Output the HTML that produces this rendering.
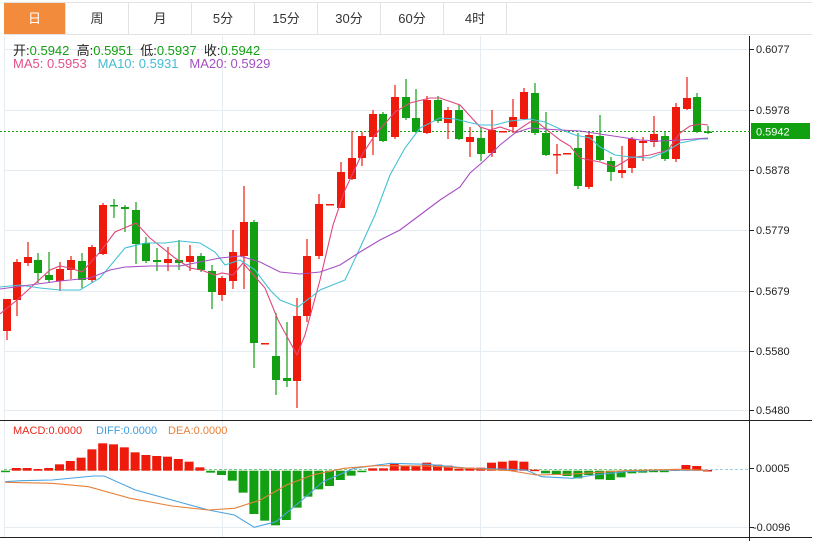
<!DOCTYPE html>
<html><head><meta charset="utf-8"><style>
body{margin:0;background:#fff;width:816px;height:541px;overflow:hidden;font-family:"Liberation Sans","Noto Sans CJK SC",sans-serif}
.tabs{position:absolute;left:4px;top:2px;height:31px;width:808px;border-top:1px solid #e3e3e3;border-bottom:1px solid #e3e3e3;display:flex}
.tab{height:31px;line-height:31px;text-align:center;font-size:13px;color:#333;border-right:1px solid #e3e3e3;box-sizing:border-box}
.tab.on{background:#f28c3c;color:#fff}
.info{position:absolute;left:13px;font-size:13px;white-space:nowrap}
svg{position:absolute;left:0;top:0}
</style></head><body>
<div class="tabs">
<div class="tab on" style="width:62px">日</div><div class="tab" style="width:63px">周</div><div class="tab" style="width:63px">月</div><div class="tab" style="width:63px">5分</div><div class="tab" style="width:63px">15分</div><div class="tab" style="width:63px">30分</div><div class="tab" style="width:63px">60分</div><div class="tab" style="width:63px">4时</div>
</div>
<svg width="816" height="541" id="s">
<g stroke="#e6edf2" stroke-width="1">
<line x1="4" y1="49.5" x2="750" y2="49.5"/><line x1="4" y1="110.5" x2="750" y2="110.5"/><line x1="4" y1="170.5" x2="750" y2="170.5"/><line x1="4" y1="230.5" x2="750" y2="230.5"/><line x1="4" y1="291.5" x2="750" y2="291.5"/><line x1="4" y1="351.5" x2="750" y2="351.5"/><line x1="4" y1="410.5" x2="750" y2="410.5"/>
<line x1="4" y1="527.5" x2="750" y2="527.5"/>
<line x1="222.5" y1="36" x2="222.5" y2="537"/><line x1="480.5" y1="36" x2="480.5" y2="537"/><line x1="4.5" y1="36" x2="4.5" y2="537"/>
</g>
<line x1="0" y1="420.5" x2="812" y2="420.5" stroke="#222"/>
<line x1="0" y1="537.5" x2="812" y2="537.5" stroke="#222"/>
<line x1="749.5" y1="36" x2="749.5" y2="541" stroke="#222"/>
<g stroke="#222"><line x1="749" y1="49.5" x2="754" y2="49.5"/><line x1="749" y1="110.5" x2="754" y2="110.5"/><line x1="749" y1="170.5" x2="754" y2="170.5"/><line x1="749" y1="230.5" x2="754" y2="230.5"/><line x1="749" y1="291.5" x2="754" y2="291.5"/><line x1="749" y1="351.5" x2="754" y2="351.5"/><line x1="749" y1="410.5" x2="754" y2="410.5"/><line x1="749" y1="468.5" x2="754" y2="468.5"/><line x1="749" y1="527.5" x2="754" y2="527.5"/></g>
<g font-size="11" fill="#222" font-family="Liberation Sans,sans-serif">
<text x="756" y="53">0.6077</text><text x="756" y="114">0.5978</text><text x="756" y="174">0.5878</text><text x="756" y="234">0.5779</text><text x="756" y="295">0.5679</text><text x="756" y="355">0.5580</text><text x="756" y="414">0.5480</text><text x="756" y="472">0.0005</text><text x="753" y="531">-0.0096</text>
</g>
<line x1="0" y1="131.5" x2="750" y2="131.5" stroke="#19a019" stroke-dasharray="2,2"/>
<line x1="700" y1="469.5" x2="750" y2="469.5" stroke="#9fd0e6" stroke-dasharray="3,2"/>
<line x1="4" y1="469.5" x2="700" y2="469.5" stroke="#7fc88a" stroke-dasharray="3,2"/>
<rect x="751" y="123" width="59" height="16" fill="#10a010"/>
<text x="756" y="135.5" font-size="11" fill="#fff">0.5942</text>
<g id="c"></g>
<g id="m"></g>
<g fill="none" stroke-width="1.1">
<polyline id="p5" stroke="#e0457b"/><polyline id="p10" stroke="#45c0d6"/><polyline id="p20" stroke="#a54fc4"/>
</g>
<g fill="none" stroke-width="1.1">
<polyline id="dif" stroke="#4ca3e0"/><polyline id="dea" stroke="#e8803a"/>
</g>
<text x="13" y="434" font-size="11" fill="#e8281c">MACD:0.0000</text>
<text x="96" y="434" font-size="11" fill="#3fa0e0">DIFF:0.0000</text>
<text x="168" y="434" font-size="11" fill="#e8803a">DEA:0.0000</text>
</svg>
<div class="info" style="top:40px;color:#222">开:<span style="color:#12a012">0.5942</span>&nbsp;&nbsp;高:<span style="color:#12a012">0.5951</span>&nbsp;&nbsp;低:<span style="color:#12a012">0.5937</span>&nbsp;&nbsp;收:<span style="color:#12a012">0.5942</span></div>
<div class="info" style="top:56px"><span style="color:#e0508a">MA5: 0.5953</span>&nbsp;&nbsp;&nbsp;<span style="color:#45bcd6">MA10: 0.5931</span>&nbsp;&nbsp;&nbsp;<span style="color:#a54fc4">MA20: 0.5929</span></div>
<script>
var R='#ee1a0c',G='#12a012';
var C=[[7,299,331,299,340,R],[17,262,300,259,316,R],[28,257,263,242,266,R],[38,260,273,253,283,G],[49,275,280,252,283,G],[60,269,281,262,291,R],[71,260,270,256,279,R],[82,261,280,253,288,G],[92,247,280,245,283,R],[103,205,254,203,255,R],[114,205,206.5,199,218,G],[125,207,209,205,232,G],[136,210,244,202,264,G],[146,243,261,237,263,G],[157,260,262,248,271,G],[168,259,263,247,271,R],[179,260,263,240,270,G],[190,256,262,245,271,R],[201,256,270,253,272,G],[212,271,292,265,309,G],[222,278,295,276,301,R],[233,252,281,230,289,R],[244,222,256,186,289,R],[254,222,343,220,368,G],[265,343,344.5,343,344,R],[276,356,380,313,395,G],[287,378,381,322,387,G],[297,316,381,298,408,R],[307,256,316,239,322,R],[319,204,256,194,259,R],[330,204,205.5,204,205,R],[341,172,208,162,208,R],[352,158,179,131,180,R],[362,136,158,132,166,R],[373,114,137,110,155,R],[383,114,141,112,142,G],[395,97,137,85,139,R],[406,97,118,79,120,G],[416,118,132,89,133,G],[427,100,133,96,134,R],[438,100,121,96,123,G],[448,110,123,107,139,R],[459,110,139,105,140,G],[470,137,142,127,157,R],[481,138,154,127,161,G],[492,130,153,110,157,R],[503,131,132.5,131,132,R],[513,117,127,99,133,R],[524,92,119,88,120,R],[535,93,133,83,135,G],[546,133,155,112,156,G],[557,154,155.5,144,174,R],[567,153,154.5,153,154,R],[578,148,186,133,189,G],[589,135,187,132,189,R],[600,136,160,115,161,G],[611,161,172,157,181,G],[622,170,173,146,178,R],[632,139,168,137,173,R],[643,141,143,137,161,R],[654,134,142,116,147,R],[665,136,159,132,161,G],[676,107,159,103,162,R],[687,98,109,77,110,R],[697,97,132,93,133,G],[708,131.5,133,126,134,G]];
var h='';
C.forEach(function(c){h+='<line x1="'+c[0]+'" y1="'+c[3]+'" x2="'+c[0]+'" y2="'+c[4]+'" stroke="'+c[5]+'" stroke-width="1.2"/>';h+='<rect x="'+(c[0]-4)+'" y="'+c[1]+'" width="8" height="'+Math.max(1.5,c[2]-c[1])+'" fill="'+c[5]+'"/>';});
document.getElementById('c').innerHTML=h;
var M=[215,204,204,207,204,193,183,173,148,130,133,142,157,165,168,170,177,185,202,218,225,242,278,342,362,376,360,323,290,268,258,240,227,214,205,205,190,197,197,188,194,197,206,203,203,188,185,182,185,209,220,225,228,235,225,238,240,232,220,218,215,213,208,195,198,210];
var z=470.7,m='';
M.forEach(function(v,i){var x=5.5+10.8*i,y=400+v/3,c=v>212?G:R;var t=Math.min(y,z),hh=Math.max(1.5,Math.abs(y-z));m+='<rect x="'+(x-4.5)+'" y="'+t+'" width="9" height="'+hh+'" fill="'+c+'"/>';});
document.getElementById('m').innerHTML=m;
function P(id,a){document.getElementById(id).setAttribute('points',a.map(function(p){return p.join(',')}).join(' '));}
P('p5',[[0,314],[17,300],[50,270],[60,266],[70,268],[82,272],[100,252],[115,232],[136,223],[150,238],[175,258],[190,268],[201,270],[215,275],[222,273],[233,275],[243,263],[265,288],[278,320],[297,355],[305,335],[320,280],[333,225],[345,190],[360,158],[375,135],[395,112],[410,103],[430,98],[440,98],[460,105],[480,127],[490,130],[500,127],[515,132],[530,122],[537,122],[560,140],[570,146],[580,158],[590,160],[600,162],[615,167],[622,163],[630,158],[650,155],[668,150],[680,133],[690,126],[700,124],[708,125]]);
P('p10',[[0,287],[20,285],[40,288],[60,290],[80,290],[100,278],[125,248],[145,243],[165,243],[180,241],[200,243],[215,252],[225,265],[240,260],[255,270],[270,290],[280,300],[298,307],[310,298],[320,290],[345,280],[360,248],[375,215],[390,175],[405,148],[420,128],[440,118],[455,119],[480,125],[495,125],[510,121],[530,119],[545,122],[560,129],[575,135],[590,138],[600,147],[615,155],[630,157],[650,158],[665,152],[680,143],[700,139],[708,139]]);
P('p20',[[0,289],[30,285],[60,281],[90,278],[110,270],[125,267],[150,266],[180,266],[200,262],[220,258],[240,256],[260,262],[280,272],[300,274],[320,272],[340,265],[360,252],[380,240],[400,230],[420,215],[440,200],[460,187],[470,173],[485,160],[500,145],[515,133],[530,128],[560,130],[580,131],[600,134],[620,137],[640,140],[660,141],[680,140],[708,138]]);
function Q(id,a){P(id,a.map(function(p){return [(p[0]/1.92).toFixed(1),(400+p[1]/3).toFixed(1)]}));}
Q('dif',[[10,245],[40,242],[100,240],[180,228],[200,228],[260,270],[330,300],[400,330],[450,345],[488,382],[530,365],[580,300],[620,245],[680,205],[750,190],[820,193],[900,205],[960,207],[1010,210],[1040,230],[1100,235],[1140,225],[1200,215],[1280,210],[1360,211]]);
Q('dea',[[10,247],[100,250],[170,260],[250,295],[330,318],[400,330],[450,325],[500,300],[550,255],[600,225],[660,205],[720,197],[820,198],[900,205],[980,212],[1030,225],[1100,222],[1200,212],[1300,208],[1360,211]]);
</script>
</body></html>
